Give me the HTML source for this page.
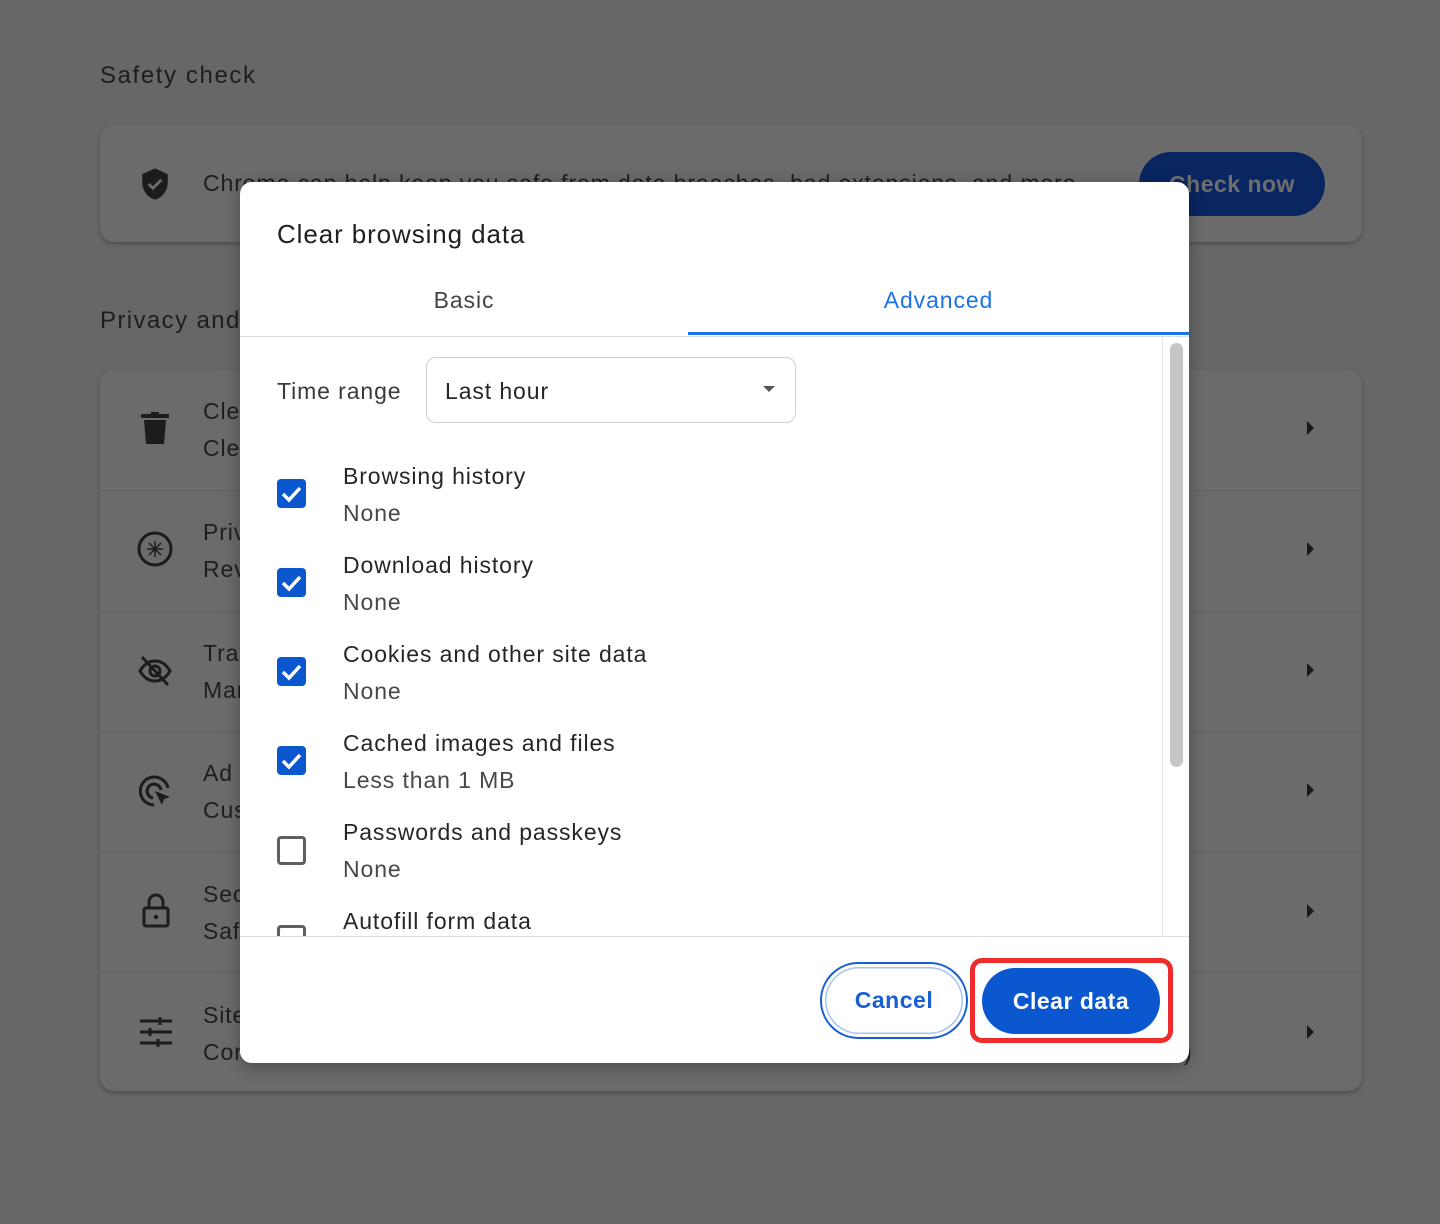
<!DOCTYPE html>
<html><head><meta charset="utf-8"><style>
*{margin:0;padding:0;box-sizing:border-box}
body{width:1440px;height:1224px;background:#676767;font-family:"Liberation Sans",Arial,sans-serif;position:relative;overflow:hidden;color:#1c1c1c;letter-spacing:0.9px}
.a{position:absolute}
.card{background:#6b6b6b;border-radius:14px;box-shadow:0 2px 4px rgba(0,0,0,.25)}
.bt{font-size:23px;color:#1e1e1e;white-space:nowrap}
.row{border-top:1px solid #606060}
.arr{width:0;height:0;border-top:7px solid transparent;border-bottom:7px solid transparent;border-left:7px solid #1a1a1a}
.dlg{left:240px;top:182px;width:949px;height:881px;background:#fff;border-radius:12px;overflow:hidden;box-shadow:0 4px 16px rgba(0,0,0,.3)}
.t{font-size:23px;color:#262626;white-space:nowrap}
.s{font-size:23px;color:#474747;white-space:nowrap}
.cb{width:29px;height:29px;border-radius:4px;background:#0b57d0}
.cbu{width:29px;height:29px;border-radius:4px;border:3px solid #5f5f5f;background:#fff}
</style></head><body>
<div class="a bt" style="left:100px;top:62px;font-size:24px;letter-spacing:1.6px">Safety check</div>
<div class="a card" style="left:100px;top:125px;width:1262px;height:117px"></div>
<svg class="a" style="left:138px;top:166px" width="34" height="36" viewBox="0 0 24 24"><path d="M12 1L3 5v6c0 5.5 3.8 10.7 9 12 5.2-1.3 9-6.5 9-12V5z" fill="#1c1c1c"/><path d="M7.5 12l3 3 6-6" stroke="#6b6b6b" stroke-width="2" fill="none"/></svg>
<div class="a bt" style="left:203px;top:170px">Chrome can help keep you safe from data breaches, bad extensions, and more</div>
<div class="a" style="left:1139px;top:152px;width:186px;height:64px;border-radius:32px;background:#0a2660;color:#6e6e6e;font-size:23px;font-weight:bold;text-align:center;line-height:64px;letter-spacing:0.5px">Check now</div>
<div class="a bt" style="left:100px;top:307px;font-size:24px;letter-spacing:1.4px">Privacy and security</div>
<div class="a card" style="left:100px;top:370px;width:1262px;height:721px"></div>
<div class="a row" style="left:100px;top:490px;width:1262px"></div>
<div class="a row" style="left:100px;top:611px;width:1262px"></div>
<div class="a row" style="left:100px;top:731px;width:1262px"></div>
<div class="a row" style="left:100px;top:852px;width:1262px"></div>
<div class="a row" style="left:100px;top:972px;width:1262px"></div>
<svg class="a" style="left:141px;top:412px" width="28" height="32" viewBox="0 0 14 16"><rect x="0" y="1" width="14" height="2" fill="#1c1c1c"/><rect x="5" y="0" width="4" height="2" fill="#1c1c1c"/><path d="M1.5 4h11l-1 12h-9z" fill="#1c1c1c"/></svg>
<svg class="a" style="left:136px;top:530px" width="38" height="38" viewBox="0 0 38 38"><circle cx="19" cy="19" r="16" stroke="#1c1c1c" stroke-width="3" fill="none"/><path d="M19 11v16M11 19h16M13 13l12 12M25 13L13 25" stroke="#1c1c1c" stroke-width="1.5"/></svg>
<svg class="a" style="left:137px;top:654px" width="36" height="34" viewBox="0 0 36 34"><path d="M3 17c4-7 9-10 15-10s11 3 15 10c-4 7-9 10-15 10S7 24 3 17z" stroke="#1c1c1c" stroke-width="3" fill="none"/><circle cx="18" cy="17" r="5" stroke="#1c1c1c" stroke-width="3" fill="none"/><path d="M5 3l26 28" stroke="#1c1c1c" stroke-width="3"/></svg>
<svg class="a" style="left:138px;top:774px" width="36" height="36" viewBox="0 0 36 36"><path d="M30 14A14 14 0 1 0 16 31" stroke="#1c1c1c" stroke-width="3" fill="none"/><path d="M23 16A7 7 0 1 0 15 24" stroke="#1c1c1c" stroke-width="3" fill="none"/><path d="M17 17l15 6-6 2-2 6z" fill="#1c1c1c"/></svg>
<svg class="a" style="left:142px;top:893px" width="28" height="36" viewBox="0 0 28 36"><path d="M7 15V9a7 7 0 0 1 14 0v6" stroke="#1c1c1c" stroke-width="3" fill="none"/><rect x="2" y="15" width="24" height="18" rx="2" stroke="#1c1c1c" stroke-width="3" fill="none"/><circle cx="14" cy="24" r="2.2" fill="#1c1c1c"/></svg>
<svg class="a" style="left:140px;top:1017px" width="32" height="30" viewBox="0 0 32 30"><path d="M0 4h32M0 15h32M0 26h32" stroke="#1c1c1c" stroke-width="3"/><path d="M20 0v8M10 11v8M18 22v8" stroke="#1c1c1c" stroke-width="3"/></svg>
<div class="a bt" style="left:203px;top:398px">Clear</div><div class="a bt" style="left:203px;top:435px">Clear</div>
<div class="a bt" style="left:203px;top:519px">Privacy</div><div class="a bt" style="left:203px;top:556px">Review</div>
<div class="a bt" style="left:203px;top:640px">Track</div><div class="a bt" style="left:203px;top:677px">Manage</div>
<div class="a bt" style="left:203px;top:760px">Ad</div><div class="a bt" style="left:203px;top:797px">Custom</div>
<div class="a bt" style="left:203px;top:881px">Security</div><div class="a bt" style="left:203px;top:918px">Safe</div>
<div class="a bt" style="left:203px;top:1002px">Site</div><div class="a bt" style="left:203px;top:1039px">Control</div>
<div class="a bt" style="left:1184px;top:1039px">)</div>
<div class="a arr" style="left:1307px;top:421px"></div>
<div class="a arr" style="left:1307px;top:542px"></div>
<div class="a arr" style="left:1307px;top:663px"></div>
<div class="a arr" style="left:1307px;top:783px"></div>
<div class="a arr" style="left:1307px;top:904px"></div>
<div class="a arr" style="left:1307px;top:1025px"></div>

<div class="a dlg">
 <div class="a t" style="left:37px;top:37px;font-size:26px;color:#1f1f1f">Clear browsing data</div>
 <div class="a t" style="left:0;width:448px;top:105px;text-align:center;color:#444">Basic</div>
 <div class="a t" style="left:448px;width:501px;top:105px;text-align:center;color:#1a73e8">Advanced</div>
 <div class="a" style="left:448px;top:150px;width:501px;height:3px;background:#1a73e8"></div>
 <div class="a" style="left:0;top:154px;width:949px;height:1px;background:#dcdcdc"></div>
 <div class="a" style="left:922px;top:155px;width:1px;height:599px;background:#e6e6e6"></div>
 <div class="a" style="left:930px;top:161px;width:13px;height:424px;border-radius:7px;background:#c6c6c6"></div>
 <div class="a t" style="left:37px;top:196px;color:#3a3a3a">Time range</div>
 <div class="a" style="left:186px;top:175px;width:370px;height:66px;border:1.5px solid #cfcfcf;border-radius:10px"></div>
 <div class="a t" style="left:205px;top:196px">Last hour</div>
 <div class="a" style="left:523px;top:204px;border-left:6px solid transparent;border-right:6px solid transparent;border-top:6px solid #555"></div>

 <div class="a cb" style="left:37px;top:297px"></div>
 <div class="a t" style="left:103px;top:281px">Browsing history</div><div class="a s" style="left:103px;top:318px">None</div>
 <div class="a cb" style="left:37px;top:386px"></div>
 <div class="a t" style="left:103px;top:370px">Download history</div><div class="a s" style="left:103px;top:407px">None</div>
 <div class="a cb" style="left:37px;top:475px"></div>
 <div class="a t" style="left:103px;top:459px">Cookies and other site data</div><div class="a s" style="left:103px;top:496px">None</div>
 <div class="a cb" style="left:37px;top:564px"></div>
 <div class="a t" style="left:103px;top:548px">Cached images and files</div><div class="a s" style="left:103px;top:585px">Less than 1 MB</div>
 <div class="a cbu" style="left:37px;top:654px"></div>
 <div class="a t" style="left:103px;top:637px">Passwords and passkeys</div><div class="a s" style="left:103px;top:674px">None</div>
 <div class="a cbu" style="left:37px;top:743px"></div>
 <div class="a t" style="left:103px;top:726px">Autofill form data</div>
 <div class="a" style="left:0;top:754px;width:949px;height:127px;background:#fff;border-top:1px solid #dcdcdc"></div>
 <div class="a" style="left:580px;top:780px;width:148px;height:77px;border:2.5px solid #1a5fd0;border-radius:39px;box-shadow:inset 0 0 0 3px #fff,inset 0 0 0 4.5px #a8c4f0;color:#1a5fd0;font-size:23px;font-weight:bold;text-align:center;line-height:72px;letter-spacing:0.5px">Cancel</div>
 <div class="a" style="left:742px;top:786px;width:178px;height:66px;border-radius:33px;background:#0b57d0;color:#fff;font-size:23px;font-weight:bold;text-align:center;line-height:66px;letter-spacing:0.5px">Clear data</div>
</div>
<svg class="a" style="left:0;top:0" width="1440" height="1224"><g fill="none" stroke="#fff" stroke-width="3.5"><path d="M283 494l6 6 11-12"/><path d="M283 583l6 6 11-12"/><path d="M283 672l6 6 11-12"/><path d="M283 761l6 6 11-12"/></g></svg>
<div class="a" style="left:970px;top:958px;width:203px;height:85px;border:5px solid #ef2b2b;border-radius:12px"></div>
</body></html>
